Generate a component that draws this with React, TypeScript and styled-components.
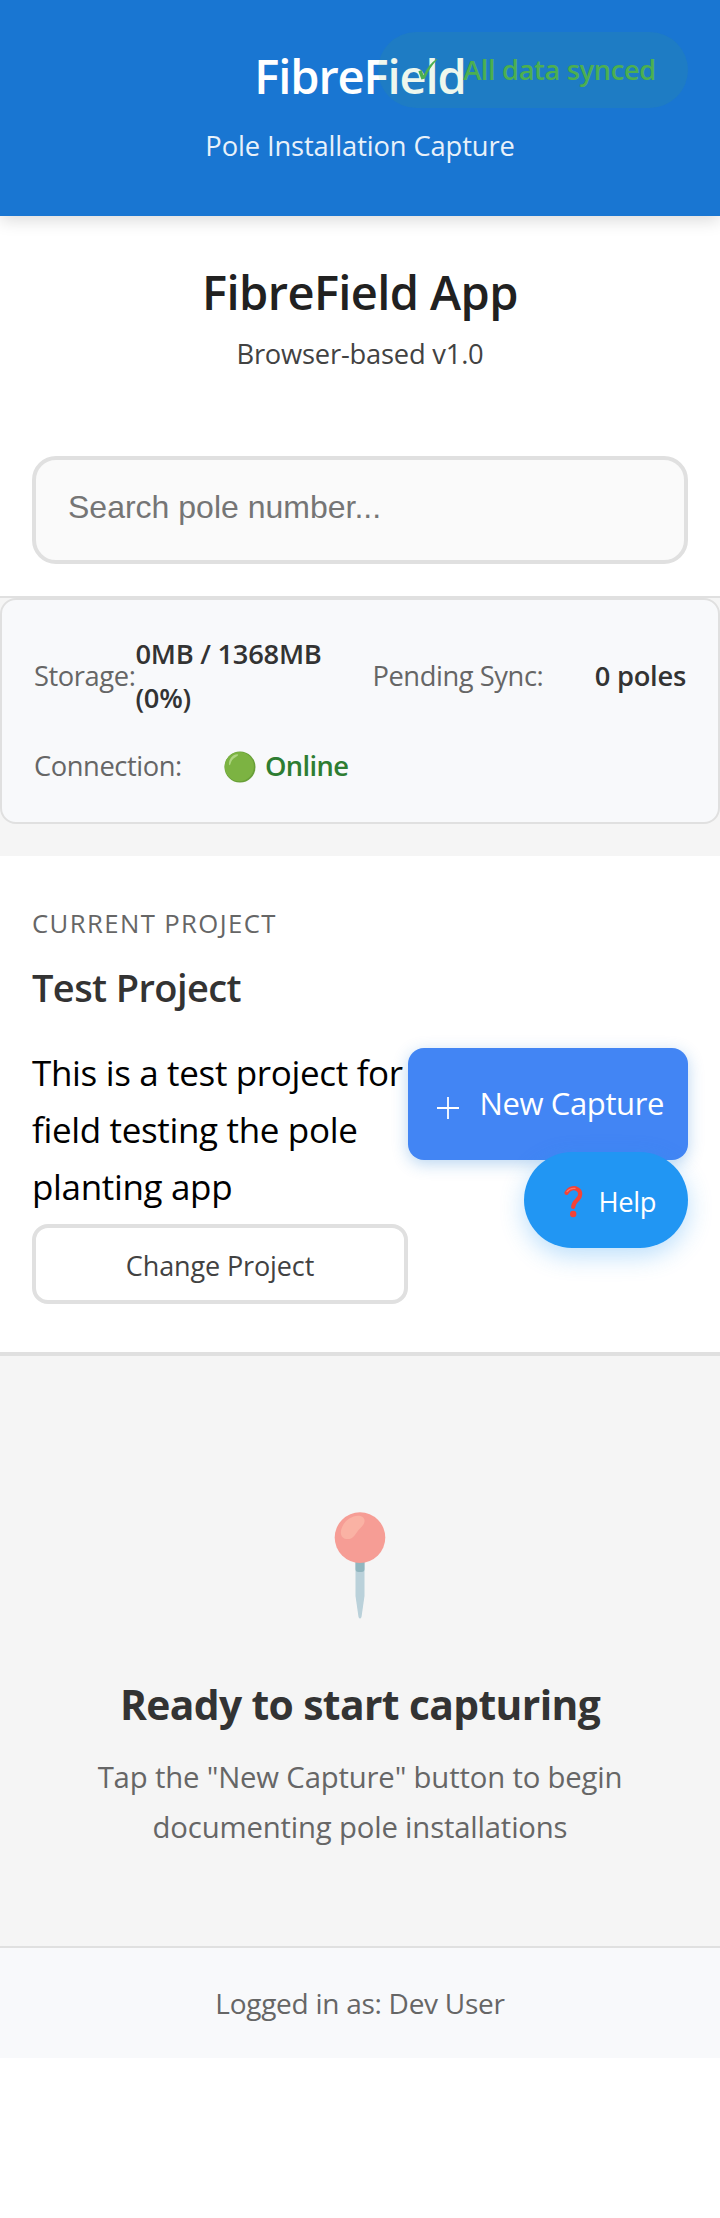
import React from 'react';
import styled, { createGlobalStyle } from 'styled-components';

const GlobalStyle = createGlobalStyle`
  * { box-sizing: border-box; }
  body { margin: 0; background: #fff; font-family: "Open Sans", "Noto Sans", sans-serif; }
  h1, h2, h3, p { margin: 0; }
  button { font-family: inherit; cursor: pointer; }
`;

const Page = styled.div`
  position: relative;
  width: 720px;
  min-height: 2218px;
  background: #fff;
`;

const Header = styled.header`
  position: relative;
  height: 216px;
  padding-top: 38px;
  background: #1976d2;
  color: #fff;
  text-align: center;
  box-shadow: 0 4px 16px rgba(0, 0, 0, 0.15);
  white-space: nowrap;
`;

const Brand = styled.h1`
  font-size: 47px;
  font-weight: 600;
  line-height: 76px;
  letter-spacing: -1.1px;
`;

const Tagline = styled.p`
  margin-top: 10px;
  font-size: 27.3px;
  line-height: 44px;
  letter-spacing: -0.12px;
  opacity: 0.9;
`;

const SyncBadge = styled.div`
  position: absolute;
  top: 32px;
  right: 32px;
  width: 310px;
  height: 76px;
  padding: 0 32px 2px 40px;
  display: flex;
  align-items: center;
  justify-content: space-between;
  border-radius: 40px;
  background: rgba(76, 175, 80, 0.1);
  color: #4caf50;
  font-size: 27.3px;
  font-weight: 600;
  letter-spacing: -0.37px;
`;

const Intro = styled.section`
  height: 208px;
  padding-top: 47px;
  text-align: center;
`;

const AppName = styled.h2`
  font-size: 47px;
  font-weight: 600;
  line-height: 58px;
  letter-spacing: -0.6px;
  color: #212121;
`;

const Version = styled.p`
  margin-top: 11px;
  font-size: 27.3px;
  line-height: 44px;
  letter-spacing: -0.2px;
  color: #424242;
`;

const SearchSection = styled.section`
  padding: 32px;
  border-bottom: 2px solid #e0e0e0;
`;

const SearchInput = styled.input`
  display: block;
  width: 100%;
  height: 108px;
  padding: 0 32px 6px;
  border: 4px solid #e0e0e0;
  border-radius: 24px;
  background: #fafafa;
  font: 32px "Liberation Sans", Arial, sans-serif;
  outline: none;
  &::placeholder { color: #757575; opacity: 1; }
`;

const StatusSection = styled.section`
  height: 258px;
  background: #f5f5f5;
`;

const StatusCard = styled.div`
  height: 226px;
  padding: 31px 32px 0;
  display: grid;
  grid-template-columns: 1fr 1fr;
  grid-template-rows: 90px 45px;
  gap: 23px 24px;
  border: 2px solid #e0e0e0;
  border-radius: 16px;
  background: #f8f9fb;
  font-size: 27.3px;
  line-height: 44.4px;
`;

const StatusItem = styled.div`
  display: flex;
  align-items: center;
  justify-content: space-between;
`;

const StatusLabel = styled.span`
  flex: none;
  letter-spacing: -0.42px;
  color: #666;
`;

const StatusValue = styled.span<{ $online?: boolean; $width?: number }>`
  display: flex;
  align-items: center;
  gap: 9px;
  width: ${(p) => (p.$width ? `${p.$width}px` : 'auto')};
  font-weight: 600;
  letter-spacing: ${(p) => (p.$online ? '-0.6px' : '-0.25px')};
  color: ${(p) => (p.$online ? '#2e7d32' : '#333')};
`;

const Project = styled.section`
  height: 500px;
  padding: 48px 32px 0;
  border-bottom: 4px solid #e0e0e0;
`;

const Eyebrow = styled.p`
  font-size: 25.7px;
  line-height: 40px;
  letter-spacing: 1.4px;
  color: #666;
`;

const ProjectName = styled.h2`
  margin-top: 14px;
  font-size: 38px;
  font-weight: 600;
  line-height: 58px;
  letter-spacing: -0.6px;
  color: #333;
`;

const ProjectBody = styled.div`
  margin-top: 28px;
  display: grid;
  grid-template-columns: 376px 280px;
  align-items: start;
`;

const Description = styled.p`
  height: 176px;
  font-size: 35px;
  line-height: 57.2px;
  letter-spacing: -0.34px;
  color: #000;
  white-space: nowrap;
`;

const ChangeButton = styled.button`
  display: block;
  width: 100%;
  height: 80px;
  margin-top: 4px;
  padding: 2px 0 0;
  border: 4px solid #e0e0e0;
  border-radius: 16px;
  background: #fff;
  color: #424242;
  font-size: 27px;
  letter-spacing: -0.12px;
`;

const CaptureButton = styled.button`
  width: 280px;
  height: 112px;
  margin-top: 4px;
  padding: 0 24px 3px 29px;
  display: flex;
  align-items: center;
  justify-content: space-between;
  border: 0;
  border-radius: 16px;
  background: #4285f4;
  color: #fff;
  font-size: 31px;
  letter-spacing: -0.38px;
  box-shadow: 0 4px 16px rgba(25, 118, 210, 0.3);
  svg { margin-top: 10px; }
`;

const HelpButton = styled.button`
  position: absolute;
  top: 1152px;
  right: 32px;
  width: 164px;
  height: 96px;
  padding: 3px 32px 0 40px;
  display: flex;
  align-items: center;
  justify-content: space-between;
  border: 0;
  border-radius: 50px;
  background: #2196f3;
  color: #fff;
  font-size: 27.3px;
  letter-spacing: -0.4px;
  box-shadow: 0 8px 24px rgba(33, 150, 243, 0.3);
`;

const EmptyState = styled.section`
  height: 590px;
  padding-top: 156px;
  display: flex;
  flex-direction: column;
  align-items: center;
  background: #f5f5f5;
  text-align: center;
`;

const EmptyTitle = styled.h3`
  margin-top: 54px;
  font-size: 40.8px;
  font-weight: 700;
  line-height: 60px;
  letter-spacing: -0.62px;
  color: #333;
`;

const EmptyText = styled.p`
  margin-top: 18px;
  font-size: 29.3px;
  line-height: 50px;
  letter-spacing: -0.17px;
  color: #666;
`;

const Footer = styled.footer`
  height: 112px;
  padding-top: 33px;
  border-top: 2px solid #e0e0e0;
  background: #f8f9fb;
  color: #666;
  text-align: center;
  font-size: 28px;
  line-height: 44px;
  letter-spacing: -0.27px;
`;

const CheckIcon = () => (
  <svg width="20" height="24" viewBox="0 0 20 24">
    <path d="M0.4 14.2 3.6 13 5.6 18.2C8.6 11.6 12.8 6 18.4 2L19.2 2.6C13.8 8.4 10 14.6 7 21.6L3.4 22.4Z" fill="#4caf50" />
  </svg>
);

const OnlineDot = () => (
  <svg width="32" height="32" viewBox="0 0 32 32">
    <circle cx="16" cy="16" r="15.5" fill="#689f38" />
    <circle cx="15.3" cy="15.6" r="14.6" fill="#7cb342" />
    <path d="M5 13.5C4.5 8.5 8.5 3.3 13.2 3.2 15.5 3.5 13.5 5.2 11.5 6.3 8.5 8 7.3 10 6.6 12.6 6.2 14.2 5.2 14.8 5 13.5Z" fill="#aed581" />
  </svg>
);

const PlusIcon = () => (
  <svg width="22" height="22" viewBox="0 0 22 22">
    <path d="M11 0V22M0 11H22" stroke="#fff" strokeWidth="1.8" />
  </svg>
);

const QuestionIcon = () => (
  <svg width="19" height="32" viewBox="0 0 19 32">
    <path d="M2.6 6.8C5 2.2 10 1.2 13.4 3.2 17.4 5.8 16.8 10.4 13.6 13.4 10.8 16 9.4 17 9.2 21" fill="none" stroke="#f44336" strokeWidth="4.2" strokeLinecap="round" />
    <circle cx="9.2" cy="28" r="3.2" fill="#f44336" />
    <path d="M3 5.6C5 3 8 2 11 2.4" fill="none" stroke="#ff8a80" strokeWidth="1.3" strokeLinecap="round" opacity="0.7" />
  </svg>
);

const PinIcon = () => (
  <svg width="52" height="108" viewBox="0 0 52 108">
    <path d="M21.5 48H30.5V84L27.5 105Q26 108 24.5 105L21.5 84Z" fill="#bad1da" />
    <path d="M21.5 48H30.5V57Q30.5 60 27.5 60H24.5Q21.5 60 21.5 57Z" fill="#91b6bf" />
    <circle cx="26" cy="25.6" r="25.3" fill="#f69d95" />
    <path d="M7.4 17C10 8 20 2 27 4.2 33 6.5 30.5 12.5 26.5 16 22 20 21.5 24 17.5 26.2 10.5 29 5 24.5 7.4 17Z" fill="#fab2a4" />
  </svg>
);

export default function App() {
  return (
    <Page>
      <GlobalStyle />
      <Header>
        <Brand>FibreField</Brand>
        <Tagline>Pole Installation Capture</Tagline>
        <SyncBadge>
          <CheckIcon />
          <span>All data synced</span>
        </SyncBadge>
      </Header>
      <Intro>
        <AppName>FibreField App</AppName>
        <Version>Browser-based v1.0</Version>
      </Intro>
      <SearchSection>
        <SearchInput placeholder="Search pole number..." />
      </SearchSection>
      <StatusSection>
        <StatusCard>
          <StatusItem>
            <StatusLabel>Storage:</StatusLabel>
            <StatusValue $width={213}>
              0MB / 1368MB
              <br />
              (0%)
            </StatusValue>
          </StatusItem>
          <StatusItem>
            <StatusLabel>Pending Sync:</StatusLabel>
            <StatusValue>0 poles</StatusValue>
          </StatusItem>
          <StatusItem>
            <StatusLabel>Connection:</StatusLabel>
            <StatusValue $online>
              <OnlineDot />
              Online
            </StatusValue>
          </StatusItem>
        </StatusCard>
      </StatusSection>
      <Project>
        <Eyebrow>CURRENT PROJECT</Eyebrow>
        <ProjectName>Test Project</ProjectName>
        <ProjectBody>
          <div>
            <Description>
              This is a test project for
              <br />
              field testing the pole
              <br />
              planting app
            </Description>
            <ChangeButton>Change Project</ChangeButton>
          </div>
          <CaptureButton>
            <PlusIcon />
            <span>New Capture</span>
          </CaptureButton>
        </ProjectBody>
      </Project>
      <EmptyState>
        <PinIcon />
        <EmptyTitle>Ready to start capturing</EmptyTitle>
        <EmptyText>
          Tap the "New Capture" button to begin
          <br />
          documenting pole installations
        </EmptyText>
      </EmptyState>
      <Footer>Logged in as: Dev User</Footer>
      <HelpButton>
        <QuestionIcon />
        <span>Help</span>
      </HelpButton>
    </Page>
  );
}
